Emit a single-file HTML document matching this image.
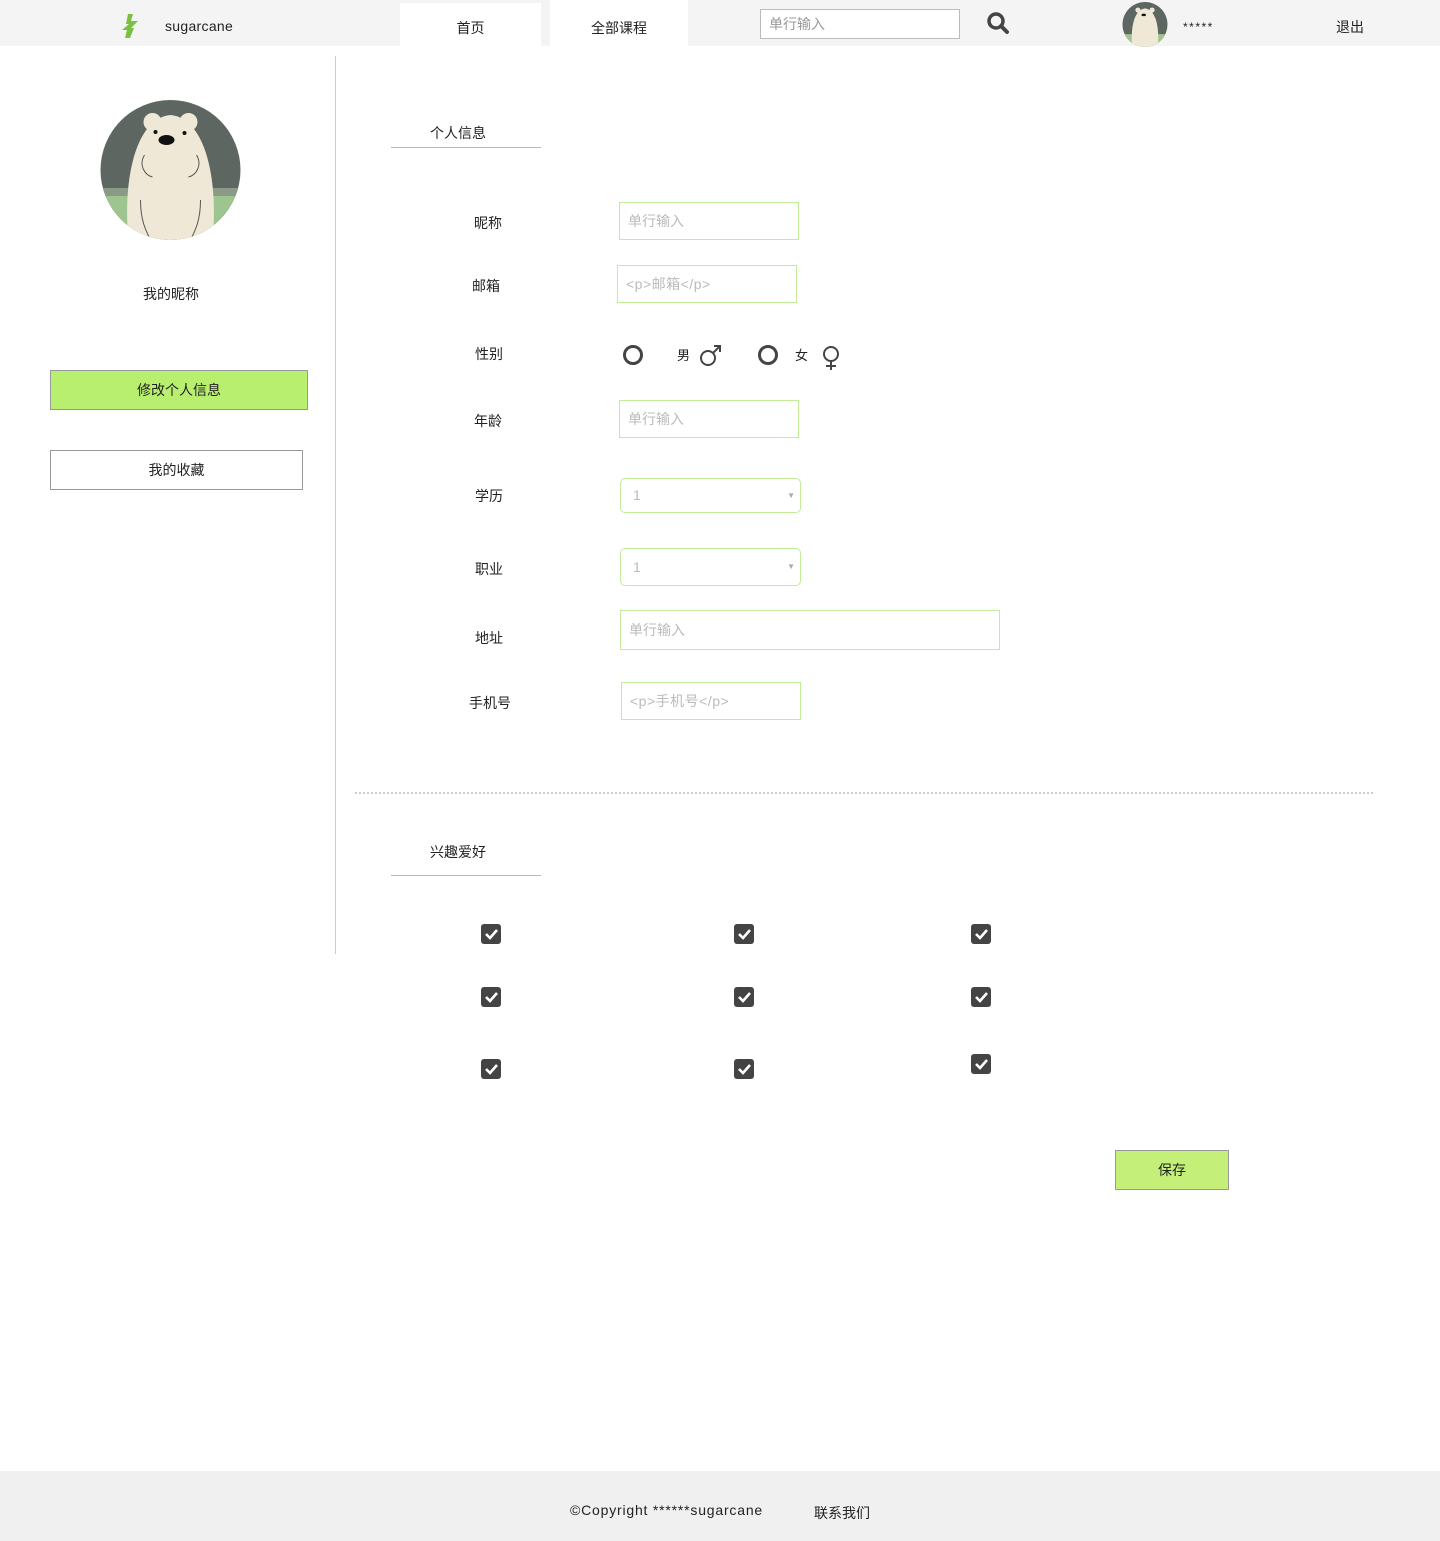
<!DOCTYPE html>
<html><head><meta charset="utf-8"><style>
*{margin:0;padding:0;box-sizing:border-box}
body{width:1440px;height:1541px;position:relative;background:#fff;font-family:"Liberation Sans","Noto Sans CJK SC",sans-serif;font-size:14px;color:#222;overflow:hidden}
.a{position:absolute}
.hdr{left:0;top:0;width:1440px;height:46px;background:#f4f4f4}
.tab{background:#fff;text-align:center;line-height:50px;font-size:14px}
.inp{border:1px solid #c2ec9a;color:#bbb;font-size:14px;padding-left:8px;background:#fff}
.lbl{font-size:14px;width:60px;text-align:center}
.cb{width:20px;height:20px;background:#444;border-radius:3px}
.cb svg{display:block}
.ttl{width:150px;text-align:center;border-bottom:1px solid #bbb;padding-bottom:4px;padding-right:16px}
</style></head><body>
<div class="a hdr"></div>
<svg class="a" style="left:121px;top:14px" width="18" height="24" viewBox="0 0 18 24"><path d="M7 0h5l-2 7h7l-7 7h3l-4 10H4l2-8H1l7-6H5z" fill="#7ac143"/></svg>
<div class="a" style="left:165px;top:18px;font-size:14px;letter-spacing:0.3px">sugarcane</div>
<div class="a tab" style="left:400px;top:3px;width:141px;height:43px">首页</div>
<div class="a tab" style="left:550px;top:0;width:138px;height:46px;line-height:56px">全部课程</div>
<div class="a" style="left:760px;top:9px;width:200px;height:30px;border:1px solid #bbb;background:#fff;color:#999;padding-left:8px;line-height:28px">单行输入</div>
<svg class="a" style="left:986px;top:11px" width="24" height="24" viewBox="0 0 24 24"><circle cx="10" cy="10" r="7" fill="none" stroke="#444" stroke-width="3.5"/><path d="M15 15l6 6" stroke="#444" stroke-width="4" stroke-linecap="round"/></svg>
<svg class="a" style="left:1120px;top:2px" width="50" height="45" viewBox="0 0 140 140"><defs><clipPath id="c1"><ellipse cx="70" cy="70" rx="70" ry="70"/></clipPath></defs><g clip-path="url(#c1)"><rect width="140" height="140" fill="#5d6661"/><rect y="100" width="140" height="40" fill="#9ec58f"/><path d="M30 140 C25 80 35 25 70 20 C105 25 115 80 110 140Z" fill="#efe8d6"/><circle cx="48" cy="25" r="8" fill="#efe8d6"/><circle cx="92" cy="25" r="8" fill="#efe8d6"/><ellipse cx="66" cy="40" rx="7" ry="4" fill="#111"/></g></svg>
<div class="a" style="left:1183px;top:20px;font-size:12px;letter-spacing:1.5px">*****</div>
<div class="a" style="left:1336px;top:17px">退出</div>

<div class="a" style="left:335px;top:56px;width:1px;height:898px;background:#ccc"></div>
<svg class="a" style="left:100px;top:100px" width="141" height="140" viewBox="0 0 140 140"><defs><clipPath id="c2"><circle cx="70" cy="70" r="70"/></clipPath></defs><g clip-path="url(#c2)"><rect width="140" height="140" fill="#5d6661"/><rect y="95" width="140" height="45" fill="#9ec58f"/><rect y="88" width="140" height="8" fill="#8a9a86"/><path d="M28 140 C22 80 35 18 70 15 C105 18 118 80 112 140Z" fill="#efe8d6"/><circle cx="52" cy="22" r="9" fill="#efe8d6"/><circle cx="88" cy="22" r="9" fill="#efe8d6"/><ellipse cx="66" cy="40" rx="8" ry="5" fill="#111"/><circle cx="55" cy="32" r="2" fill="#111"/><circle cx="84" cy="33" r="2" fill="#111"/><path d="M44 55c-6 10 0 20 8 22M96 55c6 10 0 20-8 22M40 100c0 20 5 30 10 40M100 100c0 20-5 30-10 40" stroke="#555" fill="none"/></g></svg>
<div class="a" style="left:143px;top:284px">我的昵称</div>
<div class="a" style="left:50px;top:370px;width:258px;height:40px;background:#b8ef6e;border:1px solid #999;text-align:center;line-height:38px">修改个人信息</div>
<div class="a" style="left:50px;top:450px;width:253px;height:40px;border:1px solid #999;text-align:center;line-height:38px">我的收藏</div>

<div class="a ttl" style="left:391px;top:123px">个人信息</div>
<div class="a lbl" style="left:458px;top:213px">昵称</div>
<div class="a inp" style="left:619px;top:202px;width:180px;height:38px;line-height:36px">单行输入</div>
<div class="a lbl" style="left:456px;top:276px">邮箱</div>
<div class="a inp" style="left:617px;top:265px;width:180px;height:38px;line-height:36px;letter-spacing:0.5px">&lt;p&gt;邮箱&lt;/p&gt;</div>
<div class="a lbl" style="left:459px;top:344px">性别</div>
<div class="a" style="left:623px;top:345px;width:20px;height:20px;border:3px solid #444;border-radius:50%"></div>
<div class="a" style="left:677px;top:345px;font-size:13px">男</div>
<svg class="a" style="left:699px;top:343px" width="24" height="24" viewBox="0 0 24 24"><circle cx="9" cy="15" r="7" fill="none" stroke="#444" stroke-width="2"/><path d="M14 10l7-7M15 3h6v6" fill="none" stroke="#444" stroke-width="2"/></svg>
<div class="a" style="left:758px;top:345px;width:20px;height:20px;border:3px solid #444;border-radius:50%"></div>
<div class="a" style="left:795px;top:345px;font-size:13px">女</div>
<svg class="a" style="left:821px;top:345px" width="20" height="26" viewBox="0 0 20 26"><circle cx="10" cy="9" r="7" fill="none" stroke="#444" stroke-width="2"/><path d="M10 16v9M5 21h10" stroke="#444" stroke-width="2"/></svg>
<div class="a lbl" style="left:458px;top:411px">年龄</div>
<div class="a inp" style="left:619px;top:400px;width:180px;height:38px;line-height:36px">单行输入</div>
<div class="a lbl" style="left:459px;top:486px">学历</div>
<div class="a inp" style="left:620px;top:478px;width:181px;height:35px;line-height:33px;border-radius:5px;padding-left:12px">1<span style="position:absolute;right:5px;font-size:8px;color:#aaa">▼</span></div>
<div class="a lbl" style="left:459px;top:559px">职业</div>
<div class="a inp" style="left:620px;top:548px;width:181px;height:38px;line-height:36px;border-radius:5px;padding-left:12px">1<span style="position:absolute;right:5px;font-size:8px;color:#aaa">▼</span></div>
<div class="a lbl" style="left:459px;top:628px">地址</div>
<div class="a inp" style="left:620px;top:610px;width:380px;height:40px;line-height:38px">单行输入</div>
<div class="a lbl" style="left:460px;top:693px">手机号</div>
<div class="a inp" style="left:621px;top:682px;width:180px;height:38px;line-height:36px;letter-spacing:0.5px">&lt;p&gt;手机号&lt;/p&gt;</div>

<div class="a" style="left:355px;top:792px;width:1018px;border-top:2px dotted #ccc"></div>
<div class="a ttl" style="left:391px;top:842px;padding-bottom:13px">兴趣爱好</div>

<div class="a cb" style="left:481px;top:924px"><svg width="20" height="20"><path d="M5 10l4 4 7-8" stroke="#fff" stroke-width="2.6" fill="none"/></svg></div>
<div class="a cb" style="left:734px;top:924px"><svg width="20" height="20"><path d="M5 10l4 4 7-8" stroke="#fff" stroke-width="2.6" fill="none"/></svg></div>
<div class="a cb" style="left:971px;top:924px"><svg width="20" height="20"><path d="M5 10l4 4 7-8" stroke="#fff" stroke-width="2.6" fill="none"/></svg></div>
<div class="a cb" style="left:481px;top:987px"><svg width="20" height="20"><path d="M5 10l4 4 7-8" stroke="#fff" stroke-width="2.6" fill="none"/></svg></div>
<div class="a cb" style="left:734px;top:987px"><svg width="20" height="20"><path d="M5 10l4 4 7-8" stroke="#fff" stroke-width="2.6" fill="none"/></svg></div>
<div class="a cb" style="left:971px;top:987px"><svg width="20" height="20"><path d="M5 10l4 4 7-8" stroke="#fff" stroke-width="2.6" fill="none"/></svg></div>
<div class="a cb" style="left:481px;top:1059px"><svg width="20" height="20"><path d="M5 10l4 4 7-8" stroke="#fff" stroke-width="2.6" fill="none"/></svg></div>
<div class="a cb" style="left:734px;top:1059px"><svg width="20" height="20"><path d="M5 10l4 4 7-8" stroke="#fff" stroke-width="2.6" fill="none"/></svg></div>
<div class="a cb" style="left:971px;top:1054px"><svg width="20" height="20"><path d="M5 10l4 4 7-8" stroke="#fff" stroke-width="2.6" fill="none"/></svg></div>

<div class="a" style="left:1115px;top:1150px;width:114px;height:40px;background:#c4f07a;border:1px solid #999;text-align:center;line-height:38px">保存</div>

<div class="a" style="left:0;top:1471px;width:1440px;height:70px;background:#f0f0f0"></div>
<div class="a" style="left:570px;top:1502px;letter-spacing:0.8px">©Copyright ******sugarcane</div>
<div class="a" style="left:814px;top:1503px">联系我们</div>
</body></html>
